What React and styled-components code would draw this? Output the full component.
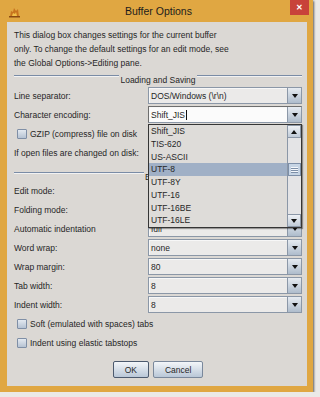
import React from 'react'
import styled, { createGlobalStyle } from 'styled-components'

const encodings = ['Shift_JIS', 'TIS-620', 'US-ASCII', 'UTF-8', 'UTF-8Y', 'UTF-16', 'UTF-16BE', 'UTF-16LE']

function App() {
  return (
    <>
      <GlobalStyle />
      <Window>
        <TitleBar>
          <AppIcon width="13" height="13" viewBox="0 0 13 13">
            <path d="M2 12 L3 6 L5 7 L6 3 L8 6 L10 4 L11 12 Z" fill="#c8741e" />
            <path d="M4 11 L5 8 L7 9 L8 7 L9 11 Z" fill="#f2c14a" />
            <rect x="1" y="11" width="11" height="1.5" fill="#8a4a12" />
          </AppIcon>
          <Title>Buffer Options</Title>
          <CloseButton>✕</CloseButton>
        </TitleBar>
        <Content>
          <Intro>
            This dialog box changes settings for the current buffer<br />
            only. To change the default settings for an edit mode, see<br />
            the Global Options-&gt;Editing pane.
          </Intro>

          <Separator $h={16}>
            <SepLine />
            <SepTitle>Loading and Saving</SepTitle>
            <SepLine />
          </Separator>

          <Row>
            <Label>Line separator:</Label>
            <Combo value="DOS/Windows (\r\n)" />
          </Row>
          <Row>
            <Label>Character encoding:</Label>
            <ComboBox $editable>
              <ComboValue>Shift_JIS<Caret /></ComboValue>
              <ArrowButton><DownArrow /></ArrowButton>
              <DropList>
                <Items>
                  {encodings.map(e => (
                    <Item key={e} $selected={e === 'UTF-8'}>{e}</Item>
                  ))}
                </Items>
                <ScrollBar>
                  <ScrollButton><UpArrow /></ScrollButton>
                  <Track>
                    <Thumb><Grip /><Grip /><Grip /></Thumb>
                  </Track>
                  <ScrollButton><DownArrow /></ScrollButton>
                </ScrollBar>
              </DropList>
            </ComboBox>
          </Row>
          <CheckRow>
            <CheckBox />
            <CheckLabel>GZIP (compress) file on disk</CheckLabel>
          </CheckRow>
          <Row>
            <Label>If open files are changed on disk:</Label>
            <Combo />
          </Row>

          <Separator $h={14} $top={5}>
            <SepLine />
            <SepTitle>Editing</SepTitle>
            <SepLine />
          </Separator>

          <Row>
            <Label>Edit mode:</Label>
            <Combo />
          </Row>
          <Row>
            <Label>Folding mode:</Label>
            <Combo />
          </Row>
          <Row>
            <Label>Automatic indentation</Label>
            <Combo value="full" />
          </Row>
          <Row>
            <Label>Word wrap:</Label>
            <Combo value="none" />
          </Row>
          <Row>
            <Label>Wrap margin:</Label>
            <Combo value="80" />
          </Row>
          <Row>
            <Label>Tab width:</Label>
            <Combo value="8" />
          </Row>
          <Row>
            <Label>Indent width:</Label>
            <Combo value="8" />
          </Row>
          <CheckRow>
            <CheckBox />
            <CheckLabel>Soft (emulated with spaces) tabs</CheckLabel>
          </CheckRow>
          <CheckRow>
            <CheckBox />
            <CheckLabel>Indent using elastic tabstops</CheckLabel>
          </CheckRow>

          <ButtonRow>
            <Button $default>OK</Button>
            <Button>Cancel</Button>
          </ButtonRow>
        </Content>
      </Window>
    </>
  )
}

// combos under the open list show no value
function Combo({ value }) {
  return (
    <ComboBox>
      <ComboValue>{value}</ComboValue>
      <ArrowButton><DownArrow /></ArrowButton>
    </ComboBox>
  )
}

export default App

const GlobalStyle = createGlobalStyle`
  html, body {
    margin: 0;
    padding: 0;
    background: #ebe9e7;
  }
  body {
    font-family: "Liberation Sans", Arial, sans-serif;
    color: #262626;
  }
`

const Window = styled.div`
  width: 313px;
  height: 392px;
  background: #e0a742;
  box-shadow: 1px 1px 2px rgba(0, 0, 0, 0.6);
  display: flex;
  flex-direction: column;
`

const TitleBar = styled.div`
  height: 22px;
  display: flex;
  align-items: flex-start;
`

const AppIcon = styled.svg`
  margin: 5px 0 0 8px;
  flex: none;
`

const Title = styled.div`
  flex: 1;
  text-align: center;
  padding-left: 6px;
  font-size: 10.5px;
  line-height: 23px;
  color: #1c1c1c;
`

const CloseButton = styled.div`
  width: 19px;
  height: 15px;
  margin-right: 4px;
  background: #c8423a;
  color: #fff;
  font-size: 8px;
  font-weight: bold;
  display: flex;
  align-items: center;
  justify-content: center;
`

const Content = styled.div`
  flex: 1;
  margin: 0 6px 6px 7px;
  padding: 6px 5px 0 7px;
  background: #dbd8d4;
  display: flex;
  flex-direction: column;
`

const Intro = styled.p`
  margin: 0;
  font-size: 8.5px;
  line-height: 14px;
`

const Separator = styled.div`
  display: flex;
  align-items: flex-start;
  height: ${p => p.$h}px;
  margin-top: ${p => p.$top || 0}px;
`

const SepLine = styled.div`
  flex: 1;
  margin-top: 5px;
  border-top: 1px solid #7a8ca6;
  border-bottom: 1px solid #f2f2f2;
`

const SepTitle = styled.span`
  font-size: 8.5px;
  line-height: 10px;
  margin-top: 5px;
  padding: 0 1px;
`

const Row = styled.div`
  display: flex;
  align-items: center;
  height: 19px;
`

const Label = styled.div`
  width: 134px;
  font-size: 8.5px;
  white-space: nowrap;
`

const ComboBox = styled.div`
  position: relative;
  box-sizing: border-box;
  width: 154px;
  height: 17px;
  display: flex;
  border: 1px solid #8b97a7;
  border-top-color: ${p => (p.$editable ? '#6e6e6e' : '#8b97a7')};
  border-left-color: ${p => (p.$editable ? '#6e6e6e' : '#8b97a7')};
  background: ${p => (p.$editable ? '#fbfbfb' : '#ebeae9')};
  box-shadow: inset 1px 1px 0 #f7f7f7;
`

const ComboValue = styled.div`
  flex: 1;
  display: flex;
  align-items: center;
  padding-left: 2px;
  font-size: 8.5px;
`

const Caret = styled.span`
  width: 1px;
  height: 10px;
  background: #111;
  margin-left: 1px;
`

const ArrowButton = styled.div`
  width: 13px;
  border-left: 1px solid #8b97a7;
  background: linear-gradient(#e6ebf1, #aebccc);
  display: flex;
  align-items: center;
  justify-content: center;
`

const DownArrow = styled.span`
  width: 0;
  height: 0;
  border-left: 3.5px solid transparent;
  border-right: 3.5px solid transparent;
  border-top: 4px solid #111;
`

const UpArrow = styled.span`
  width: 0;
  height: 0;
  border-left: 3.5px solid transparent;
  border-right: 3.5px solid transparent;
  border-bottom: 4px solid #111;
`

const DropList = styled.div`
  position: absolute;
  top: 17px;
  left: -1px;
  z-index: 2;
  box-sizing: border-box;
  width: 154px;
  height: 104px;
  display: flex;
  border: 1px solid #353535;
  background: #dedcd9;
  box-shadow: 1px 1px 1px rgba(0, 0, 0, 0.35);
`

const Items = styled.div`
  flex: 1;
  display: flex;
  flex-direction: column;
`

const Item = styled.div`
  height: 12.75px;
  line-height: 12.75px;
  padding-left: 2px;
  font-size: 8.5px;
  background: ${p => (p.$selected ? '#a0b0c6' : 'transparent')};
`

const ScrollBar = styled.div`
  width: 13px;
  display: flex;
  flex-direction: column;
  border-left: 1px solid #8b97a7;
  background: #e4e4e6;
`

const ScrollButton = styled.div`
  height: 13px;
  box-sizing: border-box;
  border: 1px solid #8b97a7;
  border-left: none;
  background: linear-gradient(#eef1f5, #c0cbd8);
  display: flex;
  align-items: center;
  justify-content: center;
`

const Track = styled.div`
  flex: 1;
`

const Thumb = styled.div`
  margin-top: 25px;
  height: 13px;
  box-sizing: border-box;
  border: 1px solid #7d8fa8;
  background: #c6d4e4;
  display: flex;
  flex-direction: column;
  justify-content: center;
  align-items: center;
  gap: 1px;
`

const Grip = styled.span`
  width: 7px;
  height: 1px;
  background: #f4f7fb;
  box-shadow: 0 1px 0 #7d8fa8;
`

const CheckRow = styled.div`
  display: flex;
  align-items: center;
  gap: 3px;
  height: 19px;
  padding-left: 3px;
`

const CheckBox = styled.span`
  width: 10px;
  height: 10px;
  box-sizing: border-box;
  border: 1px solid #7f8fa6;
  border-radius: 1px;
  background: linear-gradient(#e3e9f0, #b6c3d3);
`

const CheckLabel = styled.span`
  font-size: 8.5px;
`

const ButtonRow = styled.div`
  display: flex;
  justify-content: center;
  gap: 4px;
  margin-top: 9px;
`

const Button = styled.div`
  height: 17px;
  padding: 0 11px;
  box-sizing: border-box;
  display: flex;
  align-items: center;
  font-size: 8.5px;
  border: 1px solid ${p => (p.$default ? '#4c5a6e' : '#7a889b')};
  border-radius: 2px;
  background: linear-gradient(#f3f6f9, #b9c7d7);
`
